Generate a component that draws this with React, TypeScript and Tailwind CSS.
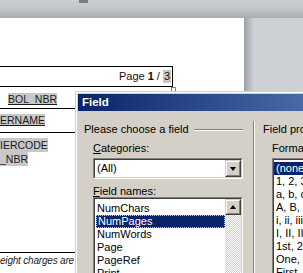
import React from "react";

const font = "font-['Liberation_Sans',Arial,sans-serif]";

function Sunken({ className = "", children }: { className?: string; children?: React.ReactNode }) {
  return (
    <div className={`border border-t-[#808080] border-l-[#808080] border-r-white border-b-white ${className}`}>
      <div className="border border-t-[#404040] border-l-[#404040] border-r-[#d4d0c8] border-b-[#d4d0c8] h-full bg-white relative overflow-hidden">
        {children}
      </div>
    </div>
  );
}

function Raised({ className = "", children }: { className?: string; children?: React.ReactNode }) {
  return (
    <div className={`border border-t-[#d4d0c8] border-l-[#d4d0c8] border-r-[#404040] border-b-[#404040] ${className}`}>
      <div className="border border-t-white border-l-white border-r-[#808080] border-b-[#808080] h-full bg-[#d4d0c8] flex items-center justify-center">
        {children}
      </div>
    </div>
  );
}

export default function App() {
  const fieldNames = ["NumChars", "NumPages", "NumWords", "Page", "PageRef", "Print"];
  const formats = [
    "(none)",
    "1, 2, 3, ...",
    "a, b, c, ...",
    "A, B, C, ...",
    "i, ii, iii, ...",
    "I, II, III, ...",
    "1st, 2nd, 3rd ...",
    "One, Two, Three ...",
    "First, Second, Third ...",
  ];
  return (
    <div className={`relative w-[303px] h-[273px] overflow-hidden bg-[#cdd0d5] ${font}`}>
      {/* top band with page shadow */}
      <div className="h-[18px] bg-gradient-to-b from-[#cbced3] via-[#c3c6cb] to-[#a8acb1]" />
      <div className="absolute left-[79px] top-0 w-[9px] h-[3px] bg-[#7d7d7d]" />
      <div className="flex">
        {/* page */}
        <div className="w-[244px] h-[255px] bg-white flex flex-col shrink-0">
          <div className="h-[48px]" />
          <div className="relative w-[173px] h-[21px] border-t border-b border-r border-black flex items-center justify-end pr-[1px] text-[11px] text-[#111]">
            <span>Page </span>
            <span className="font-bold ml-[3px]">1</span>
            <span className="ml-[3px]"> / </span>
            <span className="ml-[3px] bg-[#c8c8c8] px-[1px] leading-[13px]">3</span>
            <div className="absolute left-[171px] top-[20px] w-[5px] h-[5px] border border-[#808080] bg-white" />
          </div>
          <div className="w-[120px] h-[22px] border-b border-black pl-[8px] pt-[6px] text-[10.5px] leading-[12px] text-[#1a1a1a]">
            <span className="bg-[#c8c8c8] underline">BOL_NBR</span>
          </div>
          <div className="w-[120px] h-[24px] border-b border-black pt-[5px] text-[10.5px] leading-[12px] text-[#1a1a1a]">
            <span className="bg-[#c8c8c8] underline">ERNAME</span>
          </div>
          <div className="w-[120px] pt-[5px] text-[10.5px] leading-[14px] text-[#1a1a1a] flex flex-col items-start">
            <span className="bg-[#c8c8c8]">IERCODE</span>
            <span className="bg-[#c8c8c8]">_NBR</span>
          </div>
          <div className="flex-1" />
          <div className="w-[120px] border-t border-black pt-[2px] pb-[6px] text-[10px] italic leading-[12px] text-[#222] tracking-[-0.2px] whitespace-nowrap">
            eight charges are
          </div>
        </div>
        {/* right shadow */}
        <div className="w-[10px] h-[255px] bg-gradient-to-r from-[#9ea2a7] to-[#cdd0d5] shrink-0" />
      </div>

      {/* Field dialog */}
      <div className="absolute left-[75px] top-[91px] w-[420px] h-[200px] bg-[#d4d0c8] border-t border-l border-[#d4d0c8]">
        <div className="border-t border-l border-white h-full pl-[1px] pt-[1px] flex flex-col">
          <div className="h-[18px] bg-gradient-to-r from-[#0a246a] via-[#4a6aa8] via-[55%] to-[#a6caf0] flex items-center pl-[4px] text-[11.5px] font-bold text-white">
            Field
          </div>
          <div className="flex flex-1">
            {/* left column */}
            <div className="w-[175px] shrink-0 pl-[6px] pr-[10px] pt-[12px] flex flex-col text-[11px] text-black">
              <div className="flex items-center h-[13px]">
                <span className="leading-[13px] whitespace-nowrap shrink-0">Please choose a field</span>
                <div className="flex-1 ml-[5px] border-t border-[#808080] border-b border-b-white" />
              </div>
              <div className="pl-[9px] mt-[6px] flex flex-col">
                <div className="h-[13px] leading-[13px]">
                  <span className="underline">C</span>ategories:
                </div>
                <Sunken className="mt-[3px] h-[21px]">
                  <div className="pl-[2px] leading-[17px]">(All)</div>
                  <Raised className="absolute right-0 top-0 w-[16px] h-[17px]">
                    <div className="w-0 h-0 border-l-[3.5px] border-r-[3.5px] border-t-[4px] border-l-transparent border-r-transparent border-t-black" />
                  </Raised>
                </Sunken>
                <div className="h-[11px] leading-[11px] mt-[7px]">
                  <span className="underline">F</span>ield names:
                </div>
                <Sunken className="mt-0 h-[100px]">
                  <div className="pt-[3px] pr-[16px]">
                    {fieldNames.map((n) => (
                      <div
                        key={n}
                        className={
                          n === "NumPages"
                            ? "h-[13px] leading-[11px] ml-[1px] bg-[#0a246a] text-white border border-dotted border-[#e8d070] pl-[1px]"
                            : "h-[13px] leading-[13px] pl-[2px]"
                        }
                      >
                        {n}
                      </div>
                    ))}
                  </div>
                  <div className="absolute right-0 top-0 w-[16px] h-full flex flex-col bg-[repeating-conic-gradient(#d4d0c8_0_25%,#ffffff_0_50%)] bg-[length:2px_2px]">
                    <Raised className="w-[16px] h-[16px]">
                      <div className="w-0 h-0 border-l-[3.5px] border-r-[3.5px] border-b-[4px] border-l-transparent border-r-transparent border-b-black" />
                    </Raised>
                  </div>
                </Sunken>
              </div>
            </div>
            {/* separator */}
            <div className="w-[2px] shrink-0 mt-[10px] border-l border-[#808080] border-r border-r-white" />
            {/* right column */}
            <div className="flex-1 pl-[8px] pt-[12px] flex flex-col text-[11px] text-black">
              <div className="h-[13px] leading-[13px] whitespace-nowrap">Field properties</div>
              <div className="pl-[9px] mt-[6px] flex flex-col">
                <div className="h-[13px] leading-[13px] whitespace-nowrap">Format:</div>
                <Sunken className="mt-[3px] h-[130px] w-[140px]">
                  <div className="pt-[2px]">
                    {formats.map((f, i) => (
                      <div
                        key={f}
                        className={
                          i === 0
                            ? "h-[13px] leading-[13px] bg-[#0a246a] text-white pl-[2px] whitespace-nowrap"
                            : "h-[13px] leading-[13px] pl-[2px] whitespace-nowrap"
                        }
                      >
                        {f}
                      </div>
                    ))}
                  </div>
                </Sunken>
              </div>
            </div>
          </div>
        </div>
      </div>
    </div>
  );
}
